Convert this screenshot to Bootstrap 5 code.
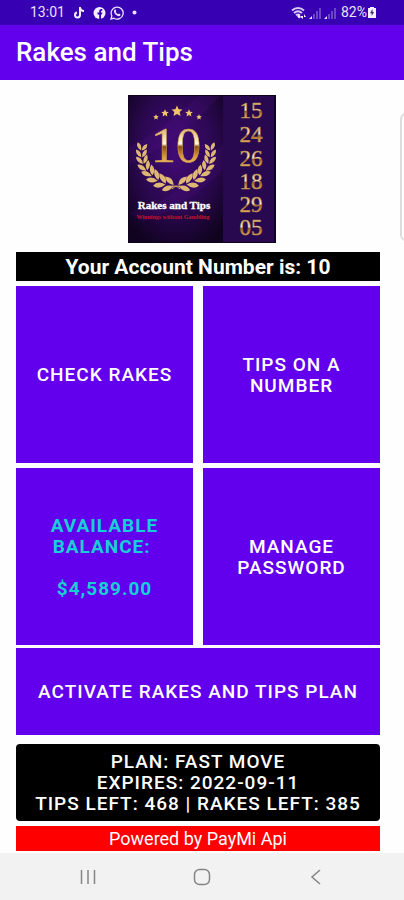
<!DOCTYPE html>
<html lang="en">
<head>
<meta charset="utf-8">
<meta name="viewport" content="width=device-width, initial-scale=1">
<title>Rakes and Tips</title>
<link href="https://cdn.jsdelivr.net/npm/bootstrap@5.3.0/dist/css/bootstrap.min.css" rel="stylesheet">
<style>
  body { font-family: Roboto, "Liberation Sans", sans-serif; background: #fefefe; }
  .status-bar { background: #3700b3; color: #e9e2fa; font-size: 14px; line-height: 25px; padding: 0 27px 0 30px; }
  .app-bar { background: #6200ee; padding: 12px 16px; }
  .app-bar h1 { font-size: 26px; line-height: 31px; font-weight: 500; color: #fff; }
  .brand-art { width: 148px; height: 148px; }
  .screen { padding: 15px 24px 2px 16px; }
  .logo-row { padding-left: 8px; margin-bottom: 9px; }
  .account { background: #000; color: #fff; font-size: 21px; line-height: 28px; font-weight: 700; padding-top: 1px; margin-bottom: 5px; }
  .tiles { display: grid; grid-template-columns: 1fr 1fr; gap: 5px 10px; margin-bottom: 3px; }
  .tile, .plan { font-size: 19px; line-height: 21px; font-weight: 500; letter-spacing: 1px; border: 0; color: #fff; }
  .tile { background: #6200ee; border-radius: 0; padding: 0 12px; }
  .tile:hover, .tile:active { background: #5300ca !important; color: #fff !important; }
  .tiles .tile { aspect-ratio: 1; }
  .tile.balance, .tile.balance:hover { color: #18cfd6 !important; font-weight: 700; }
  .tile.activate { padding: 33px 4px; margin-bottom: 9px; }
  .plan { background: #000; border-radius: 4px; padding: 7px 4px; margin-bottom: 5px; }
  .plan:hover { background: #222; color: #fff; }
  .powered { background: #f00; color: #fff; font-size: 18px; line-height: 25px; }
  .sys-nav { background: #f2f2f2; padding: 0 32px; }
  .sys-nav .btn { height: 47px; border: 0; }
  .edge-handle { position: absolute; right: -8px; top: 113px; width: 12px; height: 128px; border: 2px solid #ddd; border-radius: 6px; background: #fff; }
</style>
</head>
<body class="d-flex flex-column min-vh-100 position-relative overflow-x-hidden">
<div class="status-bar d-flex align-items-center justify-content-between">
  <div class="d-flex align-items-center gap-1">
    <span class="me-1">13:01</span>
    <svg width="12" height="14" viewBox="0 0 12 14" fill="none" stroke="#f4efff" stroke-width="2" aria-hidden="true"><path d="M7 1v8a2.500 2.500 0 1 1-3-2.500M7 2c.5 2 2 3 4 3"/></svg>
    <svg class="ms-1" width="13" height="14" viewBox="0 0 13 14" aria-hidden="true"><circle cx="6.500" cy="7" r="6" fill="#f4efff"/><path d="M6.200 13V8.500H4.500v-2h1.700V5.200C6.200 3.500 7.200 2.800 9.300 3v1.700c-1 0-1.300.2-1.300.9v.9h1.400L9 8.500H8V13z" fill="#3700b3"/></svg>
    <svg width="14" height="14" viewBox="0 0 14 14" aria-hidden="true"><path d="M1 13l.8-3.200A6 6 0 1 1 4 12.200z" fill="none" stroke="#e9e2fa" stroke-width="1.300"/><path d="M4.700 3.600c.7-.5 1.200.1 1.600 1.500l-.6.9c.5 1 1.300 1.700 2.300 2.200l.9-.7c1.500.6 1.900 1 1.500 1.700-.9 1.600-3 1-4.600-.4C4.100 7.300 3.200 4.900 4.700 3.600z" fill="#e9e2fa"/></svg>
    <svg class="ms-1" width="5" height="5" viewBox="0 0 5 5" aria-hidden="true"><circle cx="2.500" cy="2.500" r="2" fill="#e9e2fa"/></svg>
  </div>
  <div class="d-flex align-items-center">
    <svg width="46" height="14" viewBox="0 0 46 14" aria-hidden="true">
      <g fill="none" stroke="#d5c8f3" stroke-width="1.900"><path d="M1 4.500c3.500-3.300 8.500-3.300 12 0M3 7c2.500-2.300 5.500-2.300 8 0M5 9.300c1.500-1.300 2.500-1.300 4 0"/></g>
      <path d="M6 10l2-1.500L10 11l-2 1.500zM10 10h2v3l-2-1.500zM13 8l2 3h-2z" fill="#f4efff"/>
      <g fill="#6a46c4"><path d="M22 8h2v5h-2zM25 5h2v8h-2zM28 2h2v11h-2zM37 8h2v5h-2zM40 5h2v8h-2zM43 2h2v11h-2z"/></g>
      <path d="M18 13l3-3v3zM33 13l3-3v3z" fill="#e9e2fa"/>
    </svg>
    <span class="ms-1">82%</span>
    <svg width="10" height="13" viewBox="0 0 10 13" aria-hidden="true"><path d="M3 1h4v1h2v10H1V2h2z" fill="#f4efff"/><path d="M5.500 3L3 7.300h1.700V10L7 6H5.500z" fill="#3b246d"/></svg>
  </div>
</div>
<header class="app-bar"><h1 class="m-0">Rakes and Tips</h1></header>

<main class="screen d-flex flex-column flex-grow-1">
  <div class="logo-row text-center">
    <svg class="brand-art d-block mx-auto" viewBox="0 0 148 148" role="img" aria-label="Rakes and Tips logo">
      <defs>
        <linearGradient id="gold" x1="0" y1="0" x2="0" y2="1">
          <stop offset="0" stop-color="#b88435"/><stop offset=".3" stop-color="#e9c98e"/><stop offset=".48" stop-color="#fffbea"/><stop offset=".53" stop-color="#8d510e"/><stop offset=".7" stop-color="#d9973b"/><stop offset="1" stop-color="#ffe6a1"/>
        </linearGradient>
        <radialGradient id="night" cx=".5" cy=".38" r=".7"><stop offset="0" stop-color="#430b78"/><stop offset=".55" stop-color="#2c0853"/><stop offset="1" stop-color="#10031f"/></radialGradient>
        <g id="pair"><path d="M3 0Q-1 8-8 6Q-6-1 3 0Z"/><path d="M3-1Q-5-1-7-8Q1-9 3-1Z"/></g>
        <path id="star" d="M0-5L1.500-1.700 5-1.300 2.400 1 3.200 4.600 0 2.800-3.200 4.600-2.400 1-5-1.300-1.500-1.700Z"/>
        <g id="branch">
          <use href="#pair" transform="rotate(9) translate(0 34)"/>
          <use href="#pair" transform="rotate(23) translate(0 34)"/>
          <use href="#pair" transform="rotate(37) translate(0 34) scale(.95)"/>
          <use href="#pair" transform="rotate(50) translate(0 34) scale(.9)"/>
          <use href="#pair" transform="rotate(62) translate(0 35) scale(.85)"/>
          <use href="#pair" transform="rotate(74) translate(0 35) scale(.8)"/>
          <use href="#pair" transform="rotate(85) translate(0 35) scale(.75)"/>
          <use href="#pair" transform="rotate(96) translate(0 35) scale(.7)"/>
          <path d="M-4 34Q1 33 4 37" fill="none" stroke="#d9ad60" stroke-width="1"/>
        </g>
      </defs>
      <rect width="148" height="148" fill="#10031f"/>
      <rect x="1" y="1" width="95" height="146" fill="url(#night)"/>
      <path d="M1 52Q35 35 70 1H92Q48 48 1 70zM1 118Q55 105 95 48V75Q60 110 15 127z" fill="#6618a3" opacity=".14"/>
      <rect x="95" y="1" width="51" height="146" fill="#28084e"/>
      <g fill="#f0c36c">
        <use href="#star" transform="translate(49 16) scale(1.100)"/>
        <use href="#star" transform="translate(37 18) scale(.75)"/>
        <use href="#star" transform="translate(61 18) scale(.75)"/>
        <use href="#star" transform="translate(28 22) scale(.55)"/>
        <use href="#star" transform="translate(71 22) scale(.55)"/>
      </g>
      <g fill="#dfb775"><use href="#branch" transform="translate(48 57)"/><use href="#branch" transform="translate(48 57) scale(-1 1)"/></g>
      <g font-family="'Liberation Serif', serif" text-anchor="middle">
        <text x="48" y="67" font-size="50" fill="url(#gold)" stroke="#d29b49" stroke-width=".6">10</text>
        <g font-size="23" fill="url(#gold)" stroke="#b98a50" stroke-width=".5">
          <text x="123" y="23">15</text><text x="123" y="47">24</text><text x="123" y="71">26</text>
          <text x="123" y="94">18</text><text x="123" y="117">29</text><text x="123" y="140">05</text>
        </g>
        <text x="46" y="114" font-size="11" font-weight="700" fill="#fff" stroke="#fff" stroke-width=".3">Rakes and Tips</text>
        <text x="45" y="124" font-size="6" font-weight="700" fill="#c5152e">Winnings without Gambling</text>
      </g>
    </svg>
  </div>
  <div class="account text-center">Your Account Number is: 10</div>
  <div class="tiles">
    <button type="button" class="btn tile">CHECK RAKES</button>
    <button type="button" class="btn tile">TIPS ON A<br>NUMBER</button>
    <button type="button" class="btn tile balance">AVAILABLE<br>BALANCE:&nbsp;<br><br>$4,589.00</button>
    <button type="button" class="btn tile">MANAGE<br>PASSWORD</button>
  </div>
  <button type="button" class="btn tile activate">ACTIVATE RAKES AND TIPS PLAN</button>
  <button type="button" class="btn plan">PLAN: FAST MOVE<br>EXPIRES: 2022-09-11<br>TIPS LEFT: 468 | RAKES LEFT: 385</button>
  <div class="powered text-center">Powered by PayMi Api</div>
</main>

<nav class="sys-nav d-flex" aria-label="System navigation">
  <button type="button" class="btn flex-fill p-0" aria-label="Recent apps"><svg width="16" height="16" viewBox="0 0 16 16" stroke="#858585" stroke-width="1.500"><path d="M1.500 1v14M8 1v14M14.500 1v14"/></svg></button>
  <button type="button" class="btn flex-fill p-0" aria-label="Home"><svg width="18" height="18" viewBox="0 0 18 18" fill="none" stroke="#858585" stroke-width="1.500"><rect x="1.500" y="1.500" width="15" height="15" rx="5"/></svg></button>
  <button type="button" class="btn flex-fill p-0" aria-label="Back"><svg width="16" height="16" viewBox="0 0 16 16" fill="none" stroke="#858585" stroke-width="1.500"><path d="M12 1L4 8l8 7"/></svg></button>
</nav>
<div class="edge-handle" aria-hidden="true"></div>
</body>
</html>
